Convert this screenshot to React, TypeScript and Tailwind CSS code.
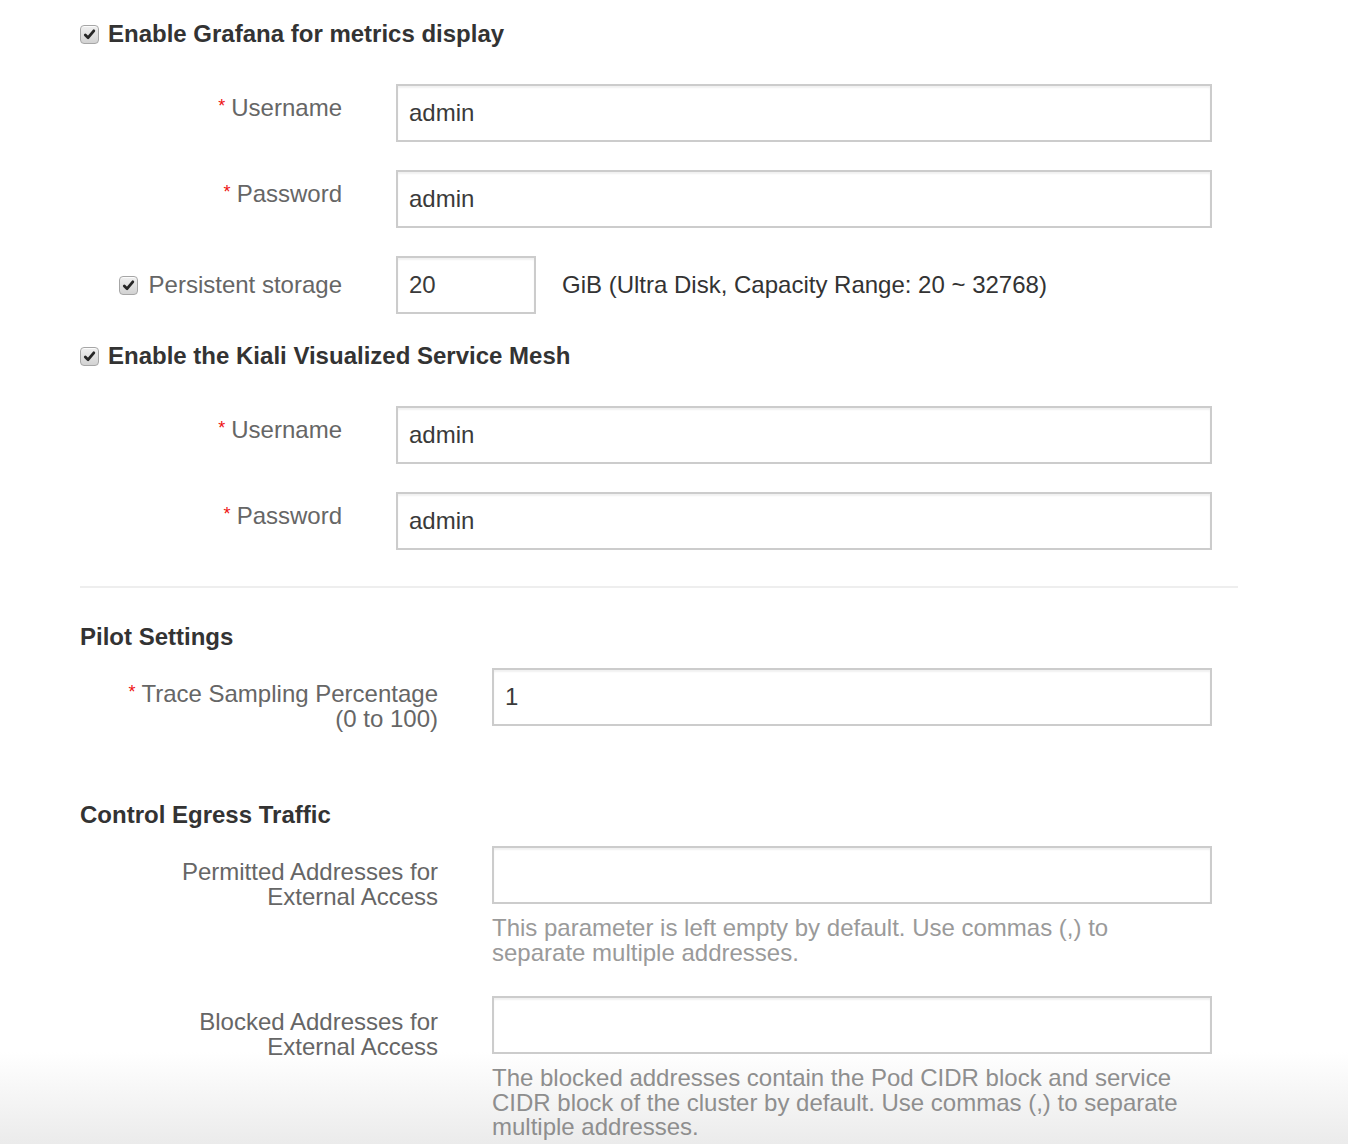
import React from "react";

const FONT = { fontFamily: '"Liberation Sans", Arial, Helvetica, sans-serif' };

function Check() {
  return (
    <div className="w-[19px] h-[19px] shrink-0 rounded-[4px] border border-[#a6a6a6] bg-gradient-to-b from-[#f0f0f0] to-[#d2d2d2] flex items-center justify-center shadow-[inset_0_1px_0_rgba(255,255,255,0.8)]">
      <svg width="13" height="13" viewBox="0 0 13 13">
        <path d="M2.3 6.9 L5.1 9.7 L10.8 2.8" fill="none" stroke="#262626" strokeWidth="2.8" strokeLinecap="round" strokeLinejoin="round" />
      </svg>
    </div>
  );
}

function Input({ value, w }: { value?: string; w: string }) {
  return (
    <div className={`${w} h-[58px] border-2 border-[#cccccc] bg-white shadow-[inset_0_2px_2px_rgba(0,0,0,0.06)] flex items-center pl-[11px] text-[24px] text-[#3a3a3a]`}>
      {value}
    </div>
  );
}

function Req() {
  return <span className="text-[#ee1111] text-[18px] align-top relative top-[-2px] mr-[6px]">*</span>;
}

function Heading({ text }: { text: string }) {
  return (
    <div className="flex items-center h-[40px]">
      <Check />
      <span className="ml-[9px] text-[24px] font-bold text-[#333333] leading-[40px]">{text}</span>
    </div>
  );
}

function CredRow({ label, value, className = "" }: { label: string; value: string; className?: string }) {
  return (
    <div className={`flex ${className}`}>
      <div className="w-[262px] pt-[12px] text-right text-[24px] leading-[24px] text-[#666666] whitespace-nowrap">
        <Req />
        {label}
      </div>
      <div className="ml-[54px]">
        <Input value={value} w="w-[816px]" />
      </div>
    </div>
  );
}

export default function App() {
  return (
    <div
      style={FONT}
      className="relative w-[1348px] h-[1144px] overflow-hidden bg-[linear-gradient(180deg,#ffffff_1052px,#ebebeb_1144px)]"
    >
      <div className="pl-[80px] pt-[14px] w-[1238px]">
        <Heading text="Enable Grafana for metrics display" />
        <CredRow label="Username" value="admin" className="mt-[30px]" />
        <CredRow label="Password" value="admin" className="mt-[28px]" />
        <div className="flex mt-[28px]">
          <div className="w-[262px] h-[58px] flex items-center justify-end text-[24px] text-[#666666] whitespace-nowrap">
            <Check />
            <span className="ml-[11px]">Persistent storage</span>
          </div>
          <div className="ml-[54px] flex items-center">
            <Input value="20" w="w-[140px]" />
            <span className="ml-[26px] text-[24px] text-[#333333] whitespace-nowrap">
              GiB (Ultra Disk, Capacity Range: 20 ~ 32768)
            </span>
          </div>
        </div>

        <div className="mt-[22px]">
          <Heading text="Enable the Kiali Visualized Service Mesh" />
        </div>
        <CredRow label="Username" value="admin" className="mt-[30px]" />
        <CredRow label="Password" value="admin" className="mt-[28px]" />

        <div className="mt-[36px] h-[2px] bg-[#eeeeee]" />

        <div className="mt-[34px] text-[24px] leading-[30px] font-bold text-[#333333]">Pilot Settings</div>
        <div className="flex mt-[16px]">
          <div className="w-[358px] pt-[14px] text-right text-[24px] leading-[24.5px] text-[#666666]">
            <div className="whitespace-nowrap">
              <Req />
              Trace Sampling Percentage
            </div>
            <div>(0 to 100)</div>
          </div>
          <div className="ml-[54px]">
            <Input value="1" w="w-[720px]" />
          </div>
        </div>

        <div className="mt-[69px] text-[24px] leading-[30px] font-bold text-[#333333]">Control Egress Traffic</div>
        <div className="flex mt-[16px]">
          <div className="w-[358px] pt-[14px] text-right text-[24px] leading-[24.5px] text-[#666666]">
            <div>Permitted Addresses for</div>
            <div>External Access</div>
          </div>
          <div className="ml-[54px] w-[720px]">
            <Input w="w-[720px]" />
            <p className="mt-[12px] w-[700px] text-[24px] leading-[24.5px] text-[#9a9a9a]">
              This parameter is left empty by default. Use commas (,) to separate multiple addresses.
            </p>
          </div>
        </div>

        <div className="flex mt-[31px]">
          <div className="w-[358px] pt-[14px] text-right text-[24px] leading-[24.5px] text-[#666666]">
            <div>Blocked Addresses for</div>
            <div>External Access</div>
          </div>
          <div className="ml-[54px] w-[720px]">
            <Input w="w-[720px]" />
            <p className="mt-[12px] w-[700px] text-[24px] leading-[24.5px] text-[#8e8e8e]">
              The blocked addresses contain the Pod CIDR block and service CIDR block of the cluster by default. Use commas (,) to separate multiple addresses.
            </p>
          </div>
        </div>
      </div>
    </div>
  );
}
